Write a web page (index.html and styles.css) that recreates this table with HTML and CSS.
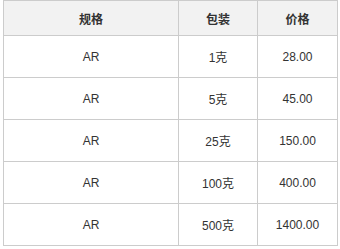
FILE: index.html
```html
<!DOCTYPE html>
<html>
<head>
<meta charset="utf-8">
<link rel="stylesheet" href="styles.css">
</head>
<body>
<div class="wrap">
<table class="spec">
  <colgroup>
    <col class="c1"><col class="c2"><col class="c3">
  </colgroup>
  <thead>
    <tr><th>规格</th><th>包装</th><th>价格</th></tr>
  </thead>
  <tbody>
    <tr><td>AR</td><td>1克</td><td>28.00</td></tr>
    <tr><td>AR</td><td>5克</td><td>45.00</td></tr>
    <tr><td>AR</td><td>25克</td><td>150.00</td></tr>
    <tr><td>AR</td><td>100克</td><td>400.00</td></tr>
    <tr><td>AR</td><td>500克</td><td>1400.00</td></tr>
  </tbody>
</table>
</div>
</body>
</html>
```
FILE: styles.css
```css
html, body {
  margin: 0;
  padding: 0;
  background: #fff;
}
.wrap {
  padding: 0 0 0 3px;
}
.spec {
  border-collapse: collapse;
  table-layout: fixed;
  width: 334px;
  font-family: "Liberation Sans", Arial, "Noto Sans CJK SC", sans-serif;
  font-size: 12px;
  color: #333;
}
.c1 { width: 175px; }
.c2 { width: 79px; }
.c3 { width: 80px; }
.spec th, .spec td {
  border: 1px solid #ccc;
  text-align: center;
  padding: 0;
}
.spec th {
  background: #f2f2f2;
  font-weight: bold;
  height: 34px;
}
.spec td {
  height: 41px;
}
```
